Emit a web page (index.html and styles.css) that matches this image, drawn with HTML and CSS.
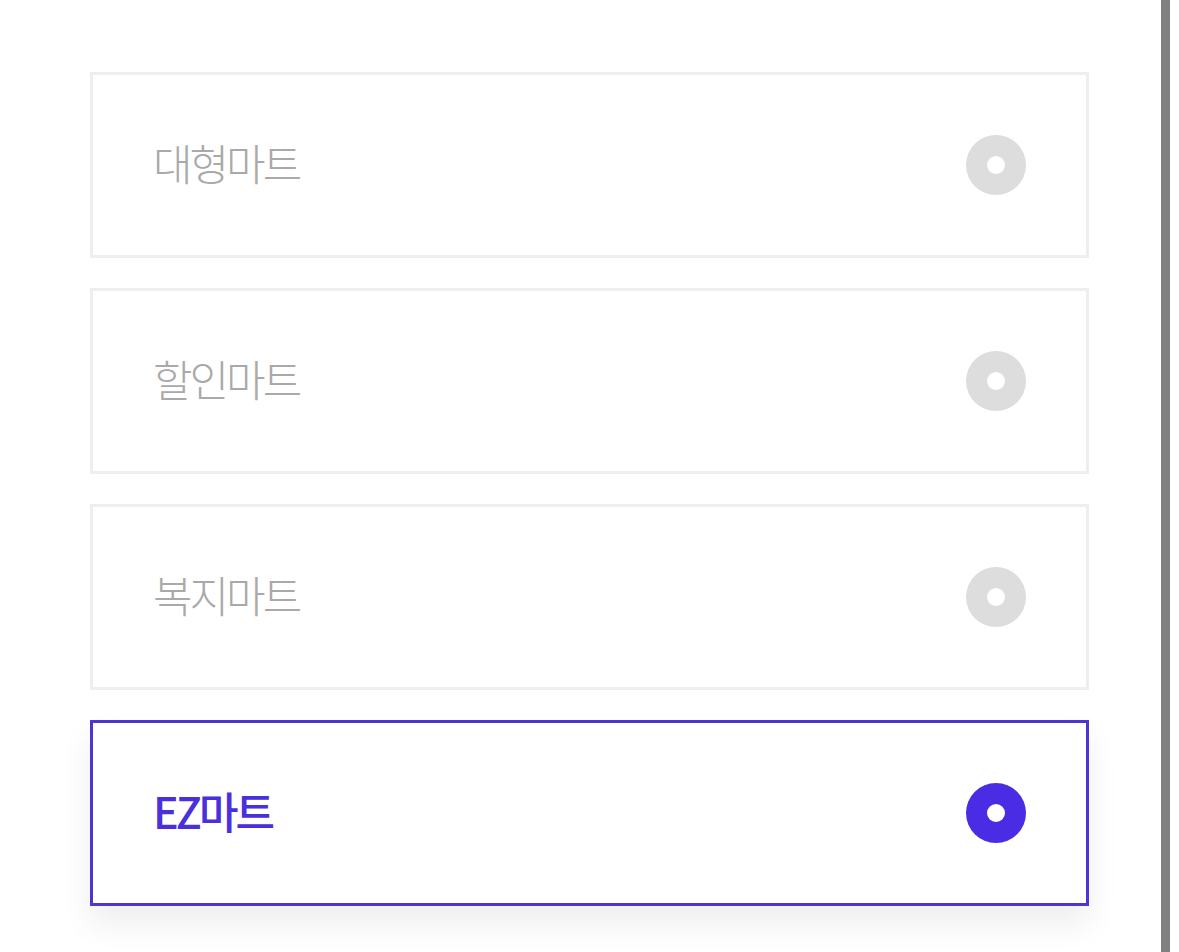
FILE: index.html
```html
<!DOCTYPE html>
<html lang="ko">
<head>
  <meta charset="UTF-8" />
  <meta name="viewport" content="width=device-width, initial-scale=1.0" />
  <title>마트 선택</title>
  <link rel="stylesheet" href="styles.css">
</head>
<body>
  <div class="page">
    <ul class="options">
      <li class="option">
        <span class="label">대형마트</span>
        <span class="radio"></span>
      </li>
      <li class="option">
        <span class="label">할인마트</span>
        <span class="radio"></span>
      </li>
      <li class="option">
        <span class="label">복지마트</span>
        <span class="radio"></span>
      </li>
      <li class="option selected">
        <span class="label">EZ마트</span>
        <span class="radio"></span>
      </li>
    </ul>
  </div>
  <div class="edge"></div>
</body>
</html>
```

FILE: styles.css
```css
* { box-sizing: border-box; }
html, body {
  margin: 0;
  padding: 0;
  height: 100%;
  background: #fff;
}
body {
  display: flex;
  font-family: 'Noto Sans CJK KR', 'Noto Sans', sans-serif;
  overflow: hidden;
}
.page {
  width: 1161px;
  padding: 72px 0 0 90px;
}
.edge {
  width: 9px;
  background: #808080;
}
.options {
  list-style: none;
  margin: 0;
  padding: 0;
  width: 999px;
  display: flex;
  flex-direction: column;
  gap: 30px;
}
.option {
  height: 186px;
  border: 3px solid #eeeeee;
  background: #fff;
  display: flex;
  align-items: center;
  justify-content: space-between;
  padding: 0 60px 0 60px;
}
.label {
  font-size: 43px;
  line-height: 1;
  font-weight: 300;
  color: #a9a9a9;
  letter-spacing: -3px;
  margin-bottom: 6px;
}
.radio {
  width: 60px;
  height: 60px;
  border-radius: 50%;
  background: #dddddd;
  display: flex;
  align-items: center;
  justify-content: center;
}
.radio::after {
  content: '';
  width: 18px;
  height: 18px;
  border-radius: 50%;
  background: #fff;
}
.option.selected {
  border-color: #4b35d3;
  box-shadow: 0 18px 30px rgba(0,0,0,0.07);
}
.option.selected .label {
  color: #4a30dc;
  font-weight: 500;
  letter-spacing: -3px;
}
.option.selected .radio {
  background: #4a2ce4;
}
```
